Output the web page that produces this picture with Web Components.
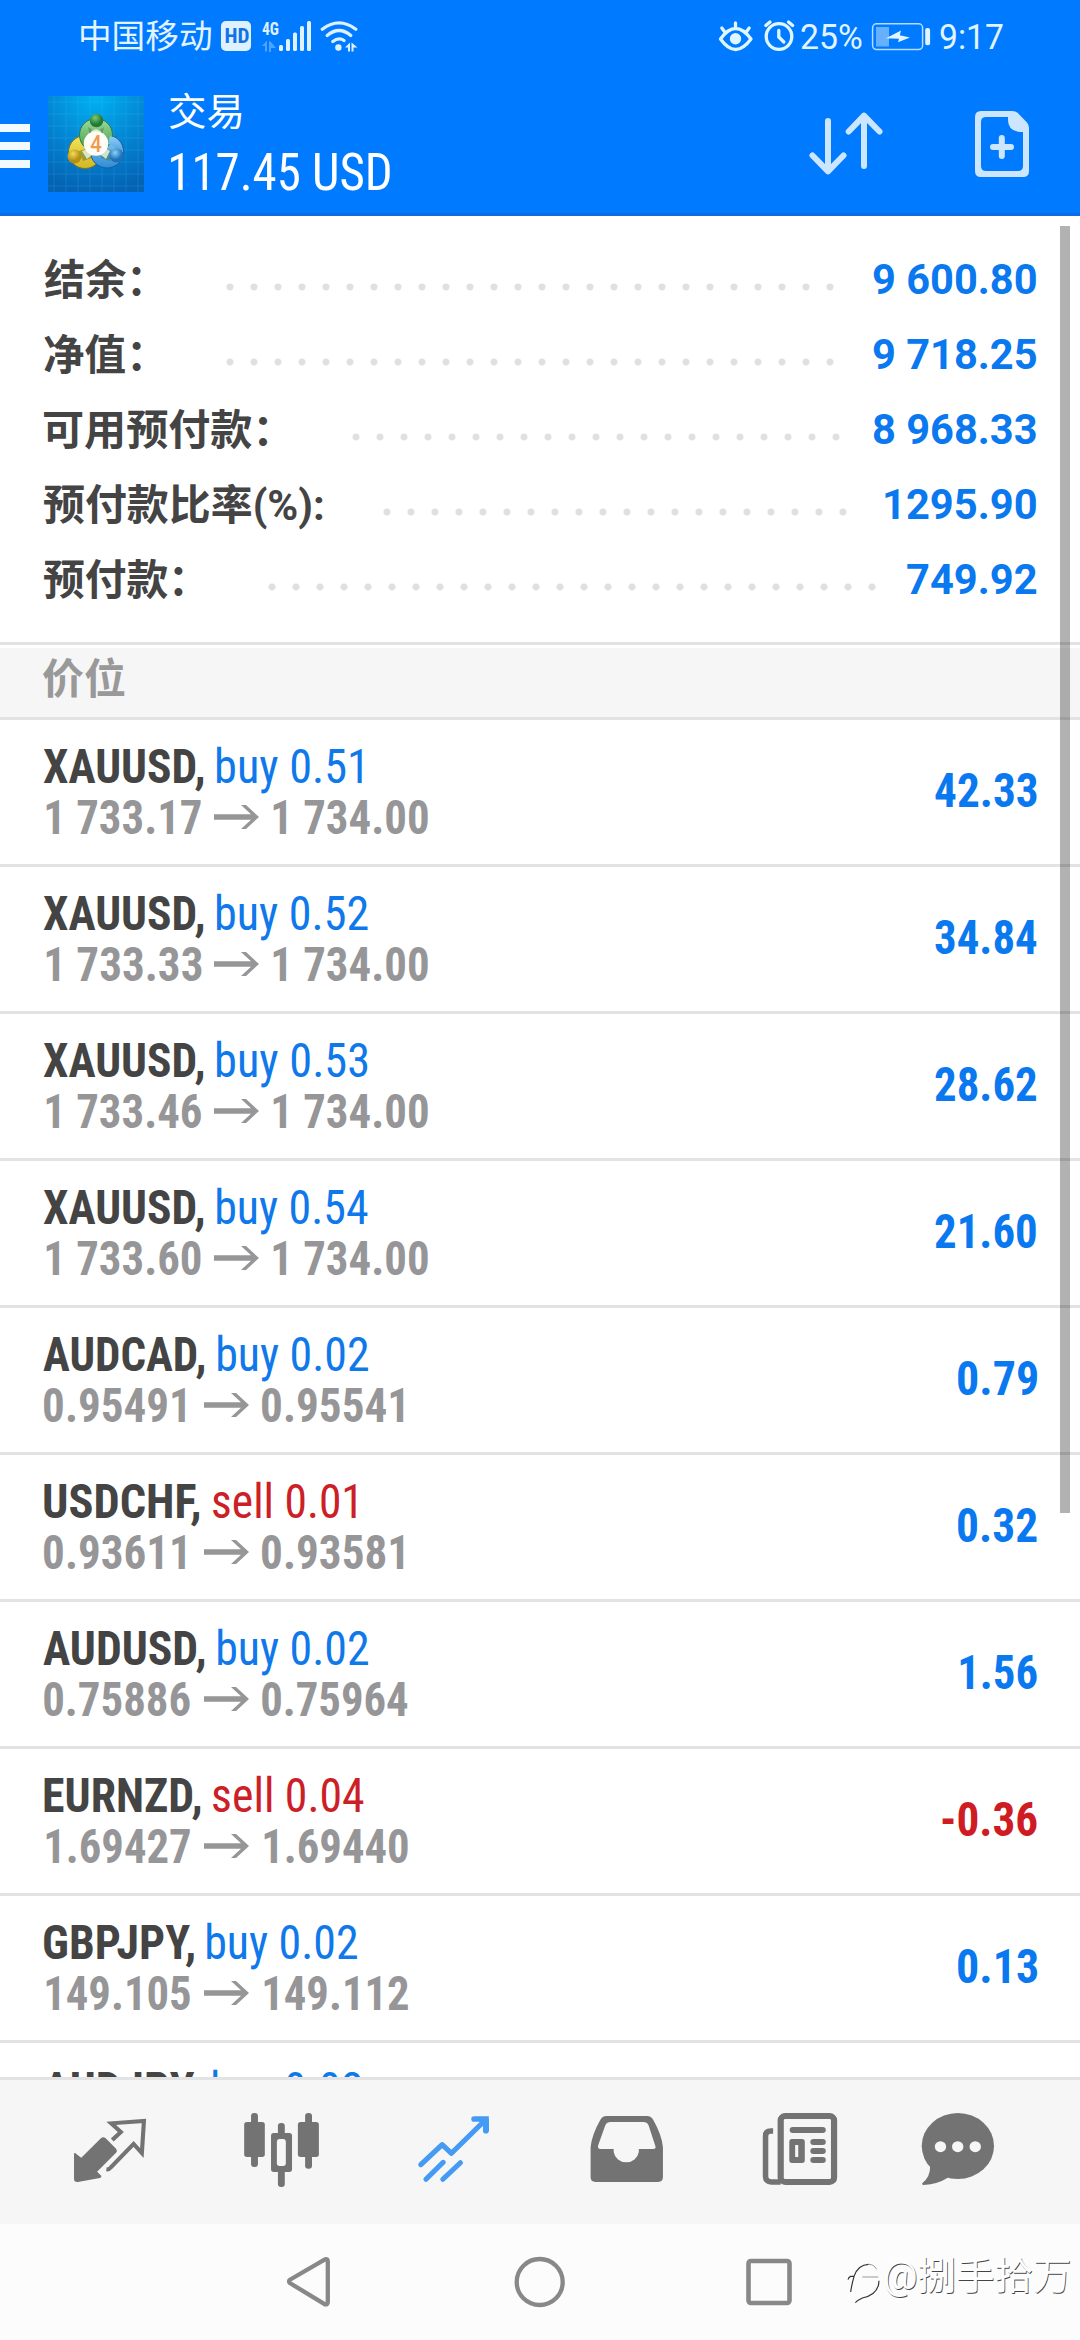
<!DOCTYPE html>
<html lang="zh-CN">
<head>
<meta charset="utf-8">
<title>交易</title>
<style>
html,body{margin:0;padding:0;background:#fff}
body{width:1080px;height:2340px;overflow:hidden;font-family:Roboto,"Noto Sans CJK SC",sans-serif}
</style>
</head>
<body>
<trade-app></trade-app>
<script>
const FONT = '"Roboto","Noto Sans CJK SC",sans-serif';
const COND = '"Roboto Condensed","Noto Sans CJK SC",sans-serif';
const pen = document.createElement('canvas').getContext('2d');

class Base extends HTMLElement {
  connectedCallback() {
    if (this.shadowRoot) return;
    this.attachShadow({mode: 'open'}).innerHTML = this.render();
  }
}
const a = (el, n) => el.getAttribute(n);

/* One line of text whose ink fills exactly the given width. */
customElements.define('fit-ink', class extends Base {
  render() {
    const size = a(this, 'size'), weight = a(this, 'weight') || 400, w = +a(this, 'w');
    const fam = this.hasAttribute('cond') ? COND : FONT;
    const text = a(this, 'text');
    pen.font = `${weight} ${size}px ${fam}`;
    const m = pen.measureText(text);
    const s = w / (m.actualBoundingBoxRight + m.actualBoundingBoxLeft);
    return `<style>:host{display:block;flex:none;width:${w}px;white-space:pre}
      span{display:inline-block;font:${weight} ${size}px/var(--lh,1.2) ${fam};transform-origin:0 0;transform:scaleX(${s}) translateX(${m.actualBoundingBoxLeft}px)}</style><span>${text}</span>`;
  }
});

customElements.define('status-bar', class extends Base {
  render() {
    return `<style>:host{display:flex;height:72px;box-sizing:border-box;padding-left:81px;padding-top:16px;--lh:42px;color:#e2f4ff}
      svg{display:block;flex:none}</style>
    <fit-ink text="中国移动" size="33.5" w="130"></fit-ink>
    <svg style="margin-left:7px" width="144" height="40" viewBox="216 16 144 40" fill="#dff1ff">
      <rect x="219" y="21" width="30" height="30" rx="5"/>
      <text x="222.4" y="43.2" font-family="Roboto Condensed" font-weight="700" font-size="20.5" textLength="25" lengthAdjust="spacingAndGlyphs" fill="#1273e6">HD</text>
      <text x="260" y="34.8" font-family="Roboto Condensed" font-weight="700" font-size="19" textLength="17" lengthAdjust="spacingAndGlyphs">4G</text>
      <path opacity=".35" d="M260 46l5-5.500v11h-2v-5.500zM267 41v11h2v-4h5l-5-6z"/>
      <rect x="277" y="45" width="4" height="6" rx="1.500"/><rect x="284" y="39" width="4" height="12" rx="1.500"/><rect x="291" y="32.500" width="4" height="18.500" rx="1.500"/><rect x="298" y="26" width="4" height="25" rx="1.500"/><rect x="305" y="21" width="4" height="30" rx="1.500"/>
      <g fill="none" stroke="#dff1ff" stroke-width="3.300" stroke-linecap="round"><path d="M320.300 29.200Q337 16.500 353.800 29.200"/><path d="M325.200 35.500Q337 25.500 348.800 35.500"/><path d="M330.800 41.500Q337 36.800 342 40.500"/></g>
      <circle cx="336.400" cy="47.500" r="3.200"/>
      <path d="M343 47.500l5-5v9h-2v-4zM349.500 42.500v9h2v-4h4z"/>
    </svg>
    <svg style="margin-left:355px" width="84" height="40" viewBox="716 16 84 40" fill="none" stroke="#dff6ff" stroke-width="3.300" stroke-linecap="round">
      <path d="M719.500 39Q734.500 18 750 39Q734.500 60 719.500 39ZM734.500 23v5M720.800 28l3 4M748.200 28l-3 4" stroke-linejoin="round"/><circle cx="734.500" cy="38.800" r="5.700" fill="#dff6ff" stroke="none"/>
      <circle cx="778" cy="36.500" r="12.800"/><path d="M777.800 30.500v6.500l5 5M764.800 25.500l4.200-3.500M791.700 25.500l-4.200-3.500"/>
    </svg>
    <fit-ink style="margin-left:0" text="25%" size="34.5" w="60.5"></fit-ink>
    <svg style="margin-left:8px" width="62" height="40" viewBox="869 16 62 40" fill="#e2f4ff">
      <rect x="871.600" y="23.800" width="50" height="25.800" rx="4" fill="none" stroke="#b5dcff" stroke-width="1.500"/>
      <rect x="875" y="27" width="13" height="19.500" opacity=".45"/>
      <path d="M885 38.200L900 30.500L898.800 35.200L909 37.600L897 42.300L898 38.800Z"/>
      <rect x="924.200" y="28" width="4.900" height="17.200" rx="2"/>
    </svg>
    <fit-ink style="margin-left:8px" text="9:17" size="34.5" w="62.5"></fit-ink>`;
  }
});

customElements.define('app-header', class extends Base {
  render() {
    let grid = '';
    for (let i = 6; i < 96; i += 12) grid += `M${i} 0V96M0 ${i}H96`;
    return `<style>:host{display:flex;height:144px;box-sizing:border-box;border-bottom:3px solid #0f6ce0;color:#fff}
      svg{display:block;flex:none}
      .burger{width:30px;padding-top:52px;display:flex;flex-direction:column;gap:10px}
      .burger i{height:8px;background:#f0faff}
      .t{margin-left:25px;width:560px}
      </style>
      <div class="burger"><i></i><i></i><i></i></div>
      <svg style="margin:24px 0 0 18px" width="96" height="96" viewBox="0 0 96 96">
        <defs>
          <radialGradient id="bg" cx=".5" cy="0" r="1"><stop offset="0" stop-color="#00b2f2"/><stop offset=".55" stop-color="#0384d2"/><stop offset="1" stop-color="#0463b4"/></radialGradient>
          <linearGradient id="g" x2="0" y2="1"><stop offset="0" stop-color="#9fdba0"/><stop offset="1" stop-color="#3a9c3e"/></linearGradient>
          <linearGradient id="y" x2="0" y2="1"><stop offset="0" stop-color="#f3e45a"/><stop offset="1" stop-color="#d3b626"/></linearGradient>
          <linearGradient id="b" x2="0" y2="1"><stop offset="0" stop-color="#8fd0f8"/><stop offset="1" stop-color="#2f8bd6"/></linearGradient>
          <radialGradient id="gb" cx=".4" cy=".3"><stop offset="0" stop-color="#7cc97a"/><stop offset="1" stop-color="#217a31"/></radialGradient>
          <radialGradient id="yb" cx=".4" cy=".3"><stop offset="0" stop-color="#f2dd58"/><stop offset="1" stop-color="#b48f14"/></radialGradient>
          <radialGradient id="bb" cx=".4" cy=".3"><stop offset="0" stop-color="#8bd0f8"/><stop offset="1" stop-color="#1d72b9"/></radialGradient>
        </defs>
        <rect width="96" height="96" fill="url(#bg)"/>
        <path d="${grid}" stroke="#5cc8f5" stroke-width=".7" opacity=".25"/>
        <g stroke-width="1">
          <circle cx="37" cy="56" r="16.500" fill="url(#y)" stroke="#77741f"/>
          <circle cx="59" cy="55.500" r="16.500" fill="url(#b)" stroke="#1b5c97"/>
          <circle cx="48" cy="39" r="16.500" fill="url(#g)" stroke="#2f7a48"/>
          <path d="M62 40Q75 44 74 56L69 62Q70 50 60 48Z" fill="url(#b)" stroke="none"/>
        </g>
        <path d="M40 31Q48 38 56 31L54 40H42ZM31 55l9-3 4 10-9 3zM65 55l-9-3-3 10 9 3z" fill="#3d6f3a" opacity=".45"/>
        <path d="M43 35l5-2 5 2-1 5h-8zM34 55l6-2 4 6-5 4zM62 55l-5-3-4 7 5 4z" fill="#e9f0dd" opacity=".85"/>
        <circle cx="48.500" cy="24.500" r="6.800" fill="url(#gb)"/><circle cx="26.500" cy="60.500" r="7" fill="url(#yb)"/><circle cx="68.500" cy="59.500" r="7" fill="url(#bb)"/>
        <circle cx="48" cy="47.500" r="12.200" fill="#fffdf8"/>
        <text x="42.300" y="56" font-family="Roboto" font-weight="500" font-size="24" textLength="11.500" lengthAdjust="spacingAndGlyphs" fill="#f3994c">4</text>
      </svg>
      <div class="t">
        <fit-ink style="--lh:48px;padding-top:16px" text="交易" size="38" w="73"></fit-ink>
        <fit-ink style="--lh:60px;margin-left:2px;margin-top:6px" text="117.45 USD" size="52.5" w="219" cond></fit-ink>
      </div>
      <svg style="margin:36px 0 0 76px" width="80" height="76" viewBox="805 108 80 76" fill="none" stroke="#cde6ff" stroke-width="6" stroke-linecap="round" stroke-linejoin="round"><path d="M828 121V170M812.500 155.500L828 171.300L843.500 155.500M864 166V117M848.700 131.500L864 115.700L879.500 131.500"/></svg>
      <svg style="margin:36px 0 0 85px" width="64" height="76" viewBox="970 108 64 76" fill="#cde6ff"><path fill-rule="evenodd" d="M981 111H1012Q1016 111 1018.500 113.800L1027 122.500Q1029 125 1029 128V171Q1029 177 1023 177H981Q975 177 975 171V117Q975 111 981 111ZM986 117Q981 117 981 122V166Q981 171 986 171H1018Q1023 171 1023 166V132H1020Q1008 131 1008 120V117Z"/><path d="M1001.800 138V156M993 147H1011" stroke="#cde6ff" stroke-width="6" stroke-linecap="round"/></svg>`;
  }
});

customElements.define('summary-row', class extends Base {
  render() {
    return `<style>:host{display:flex;height:75px;--lh:75px;padding:0 43.500px 0 44px}
      .l{color:#444;--lh:77px;height:75px}.v{color:#0a78ef;margin-left:auto}
      .d{flex:none;height:8px;margin-top:41px;background:radial-gradient(circle at 12px 4px,#e0e0e0 3px,transparent 4px) 0 0/24px 8px}</style>
      <fit-ink class="l" text="${a(this,'label')}" size="42" weight="700" w="${a(this,'lw')}"></fit-ink>
      <div class="d" style="width:${24*a(this,'n')}px;margin-left:${a(this,'x')-12-44-a(this,'lw')}px"></div>
      <fit-ink class="v" text="${a(this,'value')}" size="42" weight="700" w="${a(this,'vw')}"></fit-ink>`;
  }
});

customElements.define('section-title', class extends Base {
  render() {
    return `<style>:host{display:block;box-sizing:border-box;height:78px;border-top:3px solid #e3e3e3;border-bottom:3px solid #e3e3e3;padding-top:3px;color:#999}
      div{background:#f6f6f7;height:69px;padding-left:43px;--lh:63px}</style><div><fit-ink text="${a(this,'text')}" size="42" weight="700" w="82"></fit-ink></div>`;
  }
});

customElements.define('position-row', class extends Base {
  render() {
    const e = a(this,'edges').split(',').map(Number), p = a(this,'prices').split(','), q = a(this,'pedges').split(',').map(Number);
    const side = a(this,'order').startsWith('sell') ? '#cc2027' : '#0f78ea';
    const pl = a(this,'profit');
    return `<style>:host{display:flex;align-items:center;box-sizing:border-box;height:147px;border-bottom:3px solid #e3e3e3;padding-right:43.500px;--lh:51px}
      .r{display:flex;height:51px}.g{color:#969698}svg{display:block;flex:none;margin-top:13px}.p{margin-left:auto;margin-top:-3px;color:${pl[0]==='-'?'#cf1c22':'#0a78ef'}}</style>
      <div>
        <div class="r"><fit-ink cond text="${a(this,'symbol')}," size="48" weight="700" w="${e[1]-e[0]}" style="margin-left:${e[0]}px;color:#444"></fit-ink>
        <fit-ink cond text="${a(this,'order')}" size="48" w="${e[3]-e[2]}" style="margin-left:${e[2]-e[1]}px;color:${side}"></fit-ink></div>
        <div class="r g">${p.length < 2 ? '' : `<fit-ink cond text="${p[0]}" size="48" weight="700" w="${q[1]-q[0]}" style="margin-left:${q[0]}px"></fit-ink>
        <svg style="margin-left:${q[2]-q[1]}px" width="45" height="24" viewBox="0 0 45 24"><path fill="#969698" d="M0 9.200H37L27 0H32L45 12L32 24H27L37 14.800H0Z"/></svg>
        <fit-ink cond text="${p[1]}" size="48" weight="700" w="${q[4]-q[3]}" style="margin-left:${q[3]-q[2]-45}px"></fit-ink>`}</div>
      </div>
      ${pl ? `<fit-ink class="p" cond text="${pl}" size="48" weight="700" w="${a(this,'pw')}"></fit-ink>` : ''}`;
  }
});

customElements.define('tab-bar', class extends Base {
  render() {
    const icon = (u, body) => `<svg width="90" height="90" viewBox="0 0 90 90" fill="#737373"><g transform="scale(.34437 .33333) translate(${-u} -135)">${body}</g></svg>`;
    return `<style>:host{display:grid;grid-template-columns:172px 172px 173px 173px 158px 90px;box-sizing:border-box;height:147px;border-top:3px solid #e3e3e3;background:#f6f6f6;padding:25px 0 0 65px}svg{display:block}</style>
    ${icon(188.8,`<path d="M218 279L236 293L293 235Q300 228 307 235L337 266Q342 272 337 278L282 335L294 347Q296 353 290 354L226 366Q215 367 215 357V282Q215 278 218 279Z"/><path fill="none" stroke="#737373" stroke-width="12" d="M326 240L351 216L323 190L418 183L412 279L388 252L322 322Q317 329 309 328"/>`)}
    ${icon(688.2,`<rect x="709" y="186" width="60" height="105" rx="8"/><rect x="729" y="159" width="20" height="162" rx="9"/><rect x="865" y="186" width="61" height="105" rx="8"/><rect x="886" y="159" width="20" height="167" rx="9"/><rect x="807" y="189" width="20" height="40" rx="9"/><rect x="807" y="330" width="20" height="51" rx="9"/><path fill-rule="evenodd" d="M795 219H840Q848 219 848 227V328Q848 336 840 336H795Q787 336 787 328V227Q787 219 795 219ZM812 237Q804 237 804 246V310Q804 318 812 318H822Q830 318 830 310V246Q830 237 822 237Z"/>`)}
    ${icon(1187.7,`<path fill="none" stroke="#459bf4" stroke-width="15" stroke-linecap="round" stroke-linejoin="round" d="M1222 314L1284 254L1311 280L1410 179M1237 358L1287 307M1286 358L1337 308"/><path fill="none" stroke="#459bf4" stroke-width="17" stroke-linecap="round" d="M1377 177H1411V212"/><path fill="#459bf4" d="M1385 177H1420V212L1411 220L1400 193Z"/>`)}
    ${icon(122,`<path fill-rule="evenodd" d="M147 352V262Q150 225 175 180Q181 168 193 168H311Q323 168 329 180Q354 225 357 262V352Q357 366 343 366H161Q147 366 147 352ZM205 186Q194 186 190 195L169 256Q166 267 176 267H214V276A37 37 0 0 0 287 276V267H328Q338 267 335 258L315 195Q311 186 300 186Z"/>`)}
    ${icon(624.4,`<g fill="none" stroke="#737373"><rect x="699" y="168" width="155" height="198" rx="13" stroke-width="18"/><path stroke-width="16" d="M677 213H670Q655 213 655 228V349Q655 366 672 366H699"/></g><rect x="725" y="201" width="105" height="18" rx="9"/><path fill-rule="evenodd" d="M732 237H761Q769 237 769 245V301Q769 309 761 309H732Q724 309 724 301V245Q724 237 732 237ZM741 255V291H750V255Z"/><rect x="785" y="237" width="45" height="18" rx="9"/><rect x="785" y="264" width="45" height="18" rx="9"/><rect x="785" y="291" width="45" height="18" rx="9"/>`)}
    ${icon(1083.2,`<ellipse cx="1213.500" cy="258" rx="105" ry="99"/><path d="M1133 318Q1134 350 1110 370Q1109 376 1114 375Q1156 372 1184 353L1200 330Z"/><g fill="#f6f6f6"><circle cx="1163" cy="260" r="16.500"/><circle cx="1213" cy="260" r="16.500"/><circle cx="1264" cy="260" r="16.500"/></g>`)}`;
  }
});

customElements.define('system-nav', class extends Base {
  render() {
    return `<style>:host{display:flex;align-items:center;height:116px;background:#fcfcfc;padding-left:283px}svg{display:block;flex:none}</style>
    <svg width="50" height="60" viewBox="283 2252 50 60" fill="none" stroke="#888" stroke-width="4.300" stroke-linejoin="round"><path d="M289.500 2280Q288.500 2281.700 289.800 2283L325 2304.300Q327.800 2305 327.800 2302V2261Q327.800 2258.500 325 2259.300Z"/></svg>
    <svg style="margin-left:177px" width="60" height="60" fill="none" stroke="#888" stroke-width="4.300"><circle cx="29.700" cy="30" r="23"/></svg>
    <svg style="margin-left:169px" width="60" height="60" fill="none" stroke="#888" stroke-width="4.600"><rect x="9.500" y="9" width="41" height="42" rx="2.500"/></svg>`;
  }
});

customElements.define('water-mark', class extends Base {
  render() {
    return `<style>:host{display:flex;position:absolute;left:844px;top:2251px;--lh:50px;color:#fefefe}
      fit-ink{text-shadow:.8px .8px .3px #444}svg{display:block;flex:none}</style>
      <svg width="40" height="54" viewBox="0 0 120 162" fill="none" stroke="#333" stroke-width="3.500"><path d="M12 86Q14 78 20 76H30Q42 41 74 40M20 123Q23 101 30 77M105 89Q104 131 55 141Q42 147 34 155"/><path stroke="#999" stroke-width="3" d="M55 78H103M74 40Q90 40 98 55"/></svg>
      <fit-ink style="margin-left:.5px" text="@捌手拾万" size="38" w="184.500"></fit-ink>`;
  }
});

customElements.define('trade-app', class extends Base {
  render() {
    const rows = [
      ['XAUUSD','buy 0.51','43,203,216.5,362','1 733.17,1 734.00','45.5,200.8,214,273,428.4','42.33',101.5],
      ['XAUUSD','buy 0.52','43,203,216.5,367','1 733.33,1 734.00','45.5,200.8,214,273,428.4','34.84',101.5],
      ['XAUUSD','buy 0.53','43,203,216.5,367','1 733.46,1 734.00','45.5,200.8,214,273,428.4','28.62',101.5],
      ['XAUUSD','buy 0.54','43,203,216.5,367.5','1 733.60,1 734.00','45.5,200.8,214,273,428.4','21.60',101.5],
      ['AUDCAD','buy 0.02','43,204,218,368','0.95491,0.95541','44,185,204,262,403.3','0.79',79],
      ['USDCHF','sell 0.01','44,199,213,356.5','0.93611,0.93581','44,185,204,262,403.3','0.32',79],
      ['AUDUSD','buy 0.02','43,204,218,368','0.75886,0.75964','44,190,204,262,407.5','1.56',77],
      ['EURNZD','sell 0.04','44,200,213,364','1.69427,1.69440','45.5,190,204,264,408.4','-0.36',95],
      ['GBPJPY','buy 0.02','43.5,193,207,357','149.105,149.112','45.5,190,204,264,408.4','0.13',79],
      ['AUDJPY','buy 0.02','43,198,212.5,361.5','','0','',0]
    ];
    return `<style>:host{display:flex;flex-direction:column;width:1080px;height:2340px;position:relative;overflow:hidden;background:#fff}
      .top{background:#007aff;flex:none}.sum{padding:26px 0 25px}
      main{flex:none;height:1861px;overflow:hidden;position:relative}
      .bar{position:absolute;right:10px;top:10px;width:10px;height:1287px;background:rgba(0,0,0,.3)}</style>
      <div class="top"><status-bar></status-bar><app-header></app-header></div>
      <main>
        <div class="sum">
          <summary-row label="结余：" lw="97" x="230.300" n="26" value="9 600.80" vw="163.500"></summary-row>
          <summary-row label="净值：" lw="97" x="230.300" n="26" value="9 718.25" vw="163.500"></summary-row>
          <summary-row label="可用预付款：" lw="223.500" x="356.300" n="21" value="8 968.33" vw="163.500"></summary-row>
          <summary-row label="预付款比率(%):" lw="279" x="387.300" n="20" value="1295.90" vw="151.500"></summary-row>
          <summary-row label="预付款：" lw="139" x="272" n="26" value="749.92" vw="129.500"></summary-row>
        </div>
        <section-title text="价位"></section-title>
        ${rows.map(r => `<position-row symbol="${r[0]}" order="${r[1]}" edges="${r[2]}" prices="${r[3]}" pedges="${r[4]}" profit="${r[5]}" pw="${r[6]}"></position-row>`).join('')}
        <div class="bar"></div>
      </main>
      <tab-bar></tab-bar>
      <system-nav></system-nav>
      <water-mark></water-mark>`;
  }
});
</script>
</body>
</html>
